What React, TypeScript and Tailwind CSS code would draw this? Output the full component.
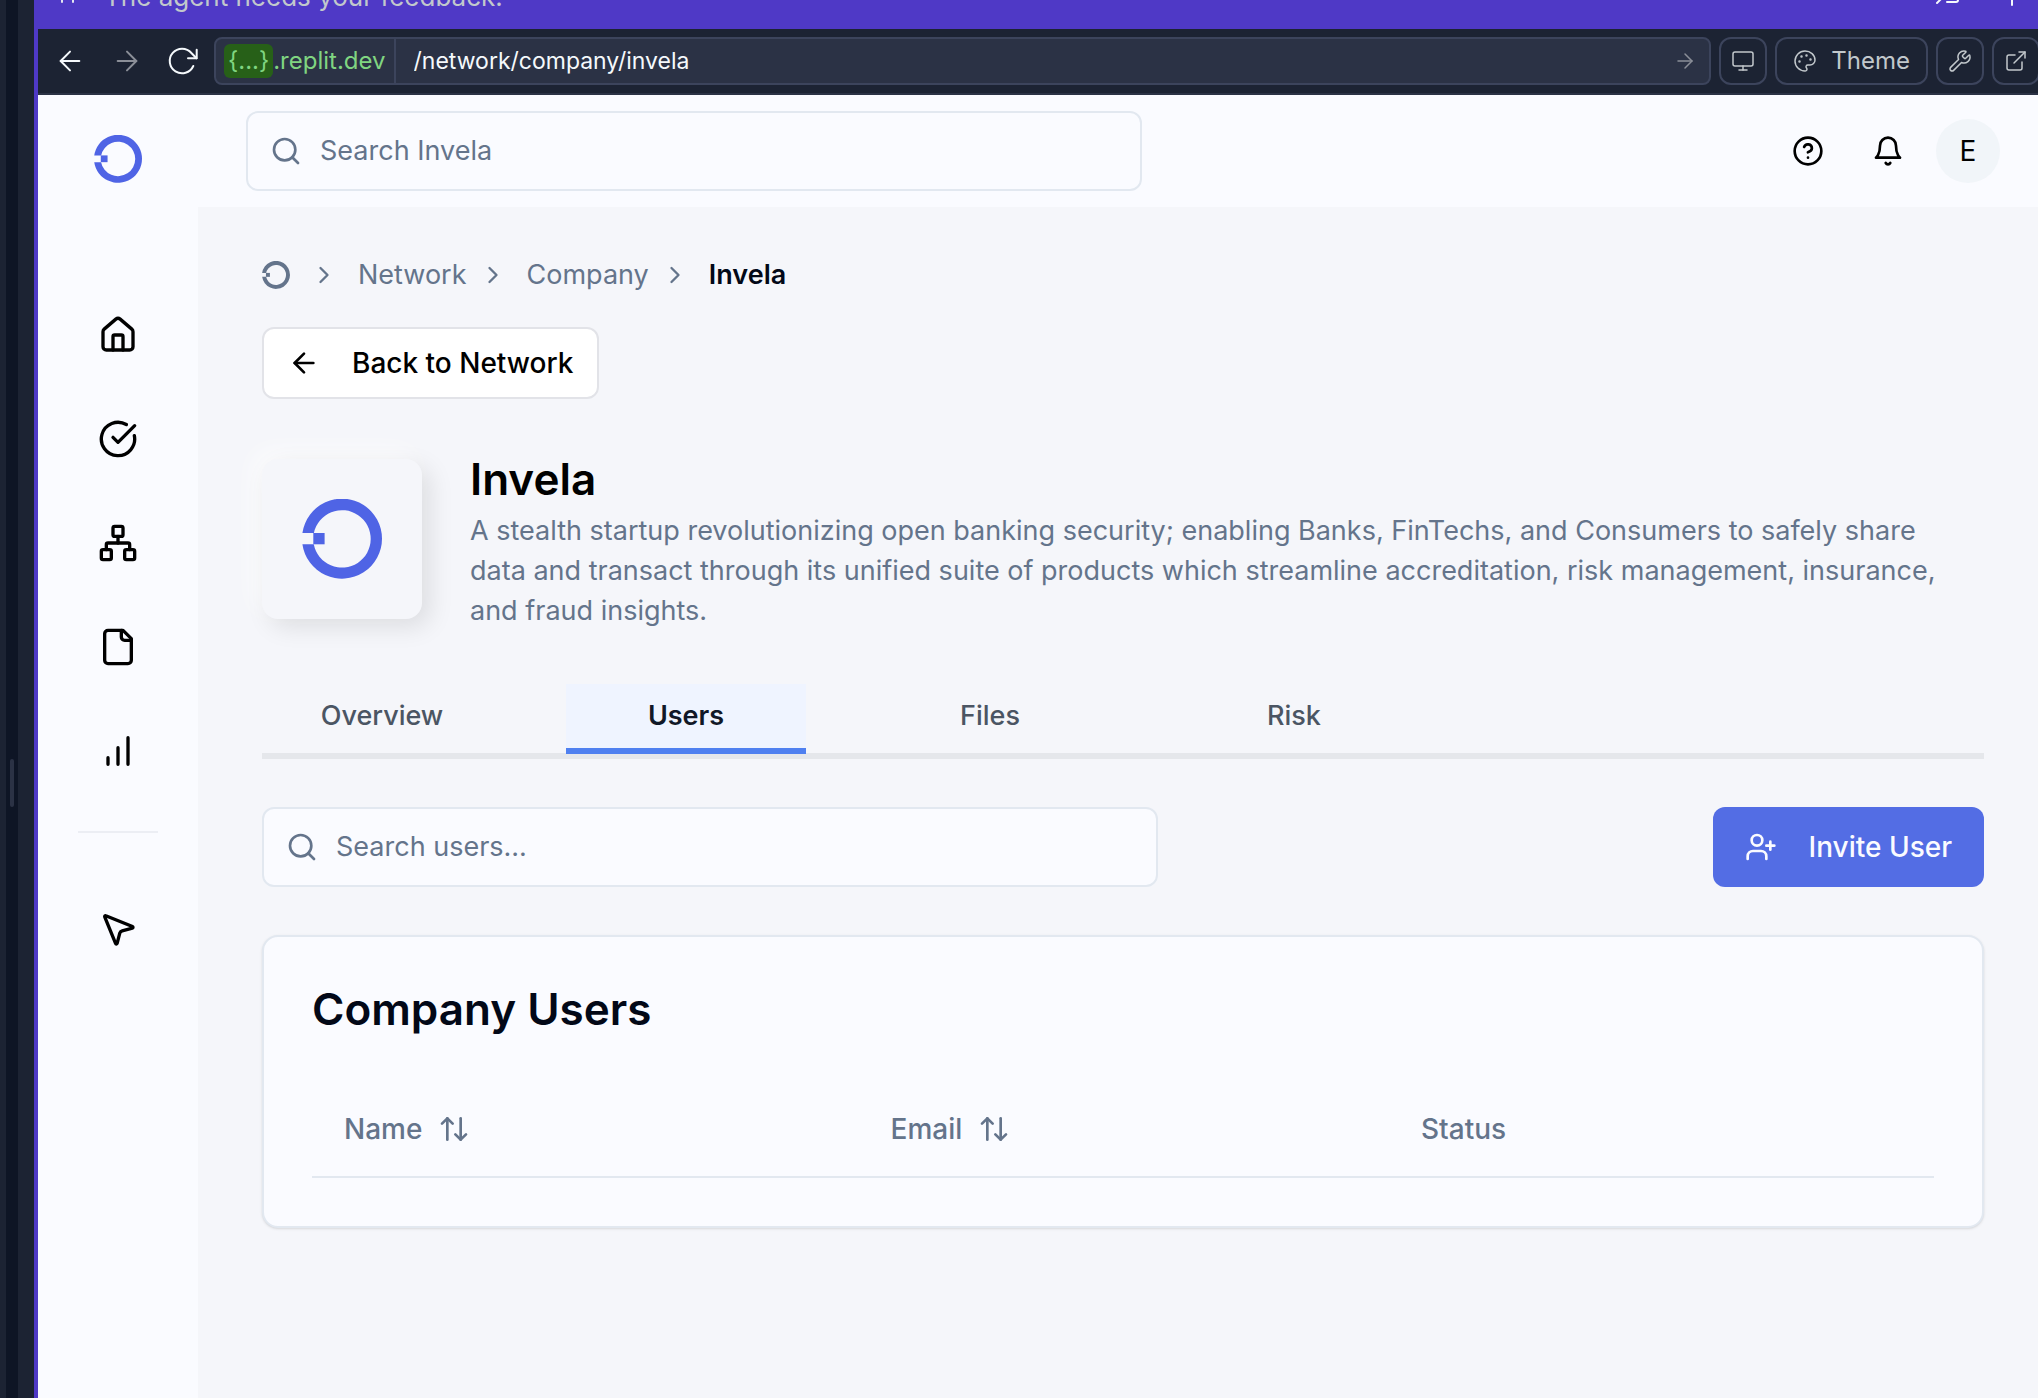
import React from "react";
import {
  ArrowLeft, ArrowRight, ArrowUpDown, ChevronRight, CircleHelp, Search, UserPlus, Monitor, Palette,
  Wrench, ExternalLink, MousePointer2, CircleCheckBig, Network, House,
} from "lucide-react";

function Logo({ className }: { className: string }) {
  return (
    <svg viewBox="0 0 80 80" className={className} fill="currentColor" aria-hidden="true">
      <path d="M0.4 34A40 40 0 1 1 0.4 45.3H11.8A28.7 28.7 0 1 0 11.9 34Z" />
      <rect x="11.3" y="34" width="11.3" height="11.3" />
    </svg>
  );
}

function Icon({ className, children }: { className: string; children: React.ReactNode }) {
  return (
    <svg viewBox="0 0 24 24" fill="none" stroke="currentColor" strokeWidth={2} strokeLinecap="round" strokeLinejoin="round" className={className} aria-hidden="true">
      {children}
    </svg>
  );
}

const BarsIcon = () => (
  <Icon className="size-10">
    <path d="M6 20v-4M12 20V10M18 20V4" />
  </Icon>
);
const FileIcon = () => (
  <Icon className="size-10">
    <path d="M15 2H6a2 2 0 0 0-2 2v16a2 2 0 0 0 2 2h12a2 2 0 0 0 2-2V7Z" />
    <path d="M14 2v4a2 2 0 0 0 2 2h4" />
  </Icon>
);
const BellIcon = () => (
  <Icon className="size-8">
    <path d="M6 8a6 6 0 0 1 12 0c0 7 3 9 3 9H3s3-2 3-9" />
    <path d="M10.3 21a1.94 1.94 0 0 0 3.4 0" />
  </Icon>
);
const ReloadIcon = () => (
  <svg viewBox="0 0 32 32" fill="none" stroke="currentColor" strokeWidth={2} strokeLinecap="round" strokeLinejoin="round" className="size-8" aria-hidden="true">
    <path d="M26.3 21A12.3 12.3 0 1 1 24.4 8l5.1 5.2" />
    <path d="M29.7 4.8v8.5H21" />
  </svg>
);

const nav = [
  { label: "Home", icon: <House className="size-10" /> },
  { label: "Tasks", icon: <CircleCheckBig className="size-10" /> },
  { label: "Network", icon: <Network className="size-10" /> },
  { label: "Files", icon: <FileIcon /> },
  { label: "Insights", icon: <BarsIcon /> },
];

const toolButton = "flex h-12 shrink-0 items-center justify-center rounded-xl border-2 border-[#3c445c] text-[#c2c8cc]";

function AgentBar() {
  return (
    <div className="flex h-[29px] shrink-0 items-end gap-6 overflow-hidden bg-[#4f39c6] pb-[18px] pl-[18px] text-[26px] leading-7 text-[#c2c8cc]">
      <svg viewBox="0 0 24 11" className="h-[11px] w-6 shrink-0" fill="none" stroke="#e4e6f2" strokeWidth={2} strokeLinecap="round" aria-hidden="true">
        <path d="M6 -4V2M17 -4V2" />
      </svg>
      <span className="flex-1">The agent needs your feedback.</span>
      <svg viewBox="0 0 104 11" className="h-[11px] w-[104px] shrink-0" fill="none" stroke="#f5f9fc" strokeWidth={2} strokeLinecap="round" strokeLinejoin="round" aria-hidden="true">
        <path d="M3 3L9 -3M13 2H22Q24 2 24 0V-3M78 -6V5" />
      </svg>
    </div>
  );
}

function Toolbar() {
  return (
    <div className="flex h-[66px] items-center gap-2 overflow-hidden border-b-2 border-[#2b3245] bg-[#1c2333]">
      <div className="flex w-[168px] shrink-0 items-center justify-between pr-[7px] pl-4 text-[#f5f9fc]">
        <button aria-label="Back"><ArrowLeft className="size-8" strokeWidth={1.5} /></button>
        <button aria-label="Forward" className="text-[#8b8f98]"><ArrowRight className="size-8" strokeWidth={1.5} /></button>
        <button aria-label="Reload"><ReloadIcon /></button>
      </div>
      <div className="flex h-12 min-w-0 flex-1 items-center rounded-lg border-2 border-[#3c445c] bg-[#2b3245] text-2xl">
        <div className="flex h-full items-center border-r-2 border-[#3c445c] px-2 text-[#80d581]">
          <span className="rounded-md bg-[#276018] px-1 leading-[34px]">{"{...}"}</span>
          <span>.replit.dev</span>
        </div>
        <input aria-label="Path" defaultValue="/network/company/invela" className="h-full min-w-0 flex-1 bg-transparent px-[18px] text-[23px] text-[#f5f9fc] outline-none" />
        <button aria-label="Go" className="pr-3 text-[#8b8f98]"><ArrowRight className="size-6" strokeWidth={1.5} /></button>
      </div>
      <button aria-label="Devices" className={toolButton + " w-12"}><Monitor className="size-6" strokeWidth={1.5} /></button>
      <button className={toolButton + " gap-3.5 px-4 text-2xl"}><Palette className="size-6" strokeWidth={1.5} />Theme</button>
      <button aria-label="Tools" className={toolButton + " w-12"}><Wrench className="size-6" strokeWidth={1.5} /></button>
      <button aria-label="Open in new tab" className={toolButton + " -mr-0.5 w-12"}><ExternalLink className="size-6" strokeWidth={1.5} /></button>
    </div>
  );
}

function SearchBox({ placeholder }: { placeholder: string }) {
  return (
    <label className="flex h-20 w-full max-w-[896px] items-center gap-[18px] rounded-xl border-2 border-[#e2e8f0] bg-[#fafbff] px-[22px] text-[27px] text-[#64748b]">
      <Search className="size-8 shrink-0" />
      <input type="text" aria-label={placeholder} placeholder={placeholder} className="w-full bg-transparent outline-none placeholder:text-[#64748b]" />
    </label>
  );
}

const tabs = ["Overview", "Users", "Files", "Risk"];

export default function App() {
  return (
    <div className="flex min-h-screen overflow-hidden bg-[#1c2333] font-['Inter',sans-serif] text-[28px] leading-10 text-black">
      <div className="flex w-[34px] shrink-0 pl-1.5">
        <div className="flex w-3 items-center justify-center bg-[#0e1525]">
          <div className="mt-[168px] h-12 w-1 rounded-sm bg-[#2b3245]" />
        </div>
      </div>
      <div className="flex min-w-0 flex-1 flex-col border-l-4 border-[#4f39c6]">
        <AgentBar />
        <Toolbar />
        <div className="flex flex-1 bg-[#fafbff]">
          <aside className="flex w-40 shrink-0 flex-col items-center pt-10">
            <a href="#" aria-label="Invela"><Logo className="size-12 text-[#4f64e5]" /></a>
            <nav className="flex w-full flex-col items-center pt-[132px]">
              <div className="flex flex-col gap-16">
                {nav.map((n) => (
                  <a key={n.label} href="#" aria-label={n.label}>{n.icon}</a>
                ))}
              </div>
              <hr className="my-[60px] w-20 border-t-2 border-[#eceef4]" />
              <a href="#" aria-label="Playground" className="mt-4"><MousePointer2 className="size-10" /></a>
            </nav>
          </aside>
          <div className="flex min-w-0 flex-1 flex-col">
            <header className="flex h-28 items-center justify-between pr-[38px] pl-12">
              <SearchBox placeholder="Search Invela" />
              <div className="flex shrink-0 items-center gap-12">
                <button aria-label="Help"><CircleHelp className="size-8" /></button>
                <button aria-label="Notifications"><BellIcon /></button>
                <button className="-ml-4 size-16 rounded-full bg-[#f1f5f9]">E</button>
              </div>
            </header>
            <main className="flex-1 bg-[#f5f6fa] pt-12 pr-[54px] pl-16">
              <nav aria-label="Breadcrumb" className="flex items-center text-[27px] text-[#64748b]">
                <a href="#" aria-label="Invela home"><Logo className="size-7" /></a>
                <ChevronRight className="mx-5 size-7" />
                <a href="#">Network</a>
                <ChevronRight className="mr-5 ml-3 size-7" />
                <a href="#">Company</a>
                <ChevronRight className="mr-5 ml-3 size-7" />
                <span className="font-semibold text-[#020817]">Invela</span>
              </nav>
              <button className="mt-8 flex h-[72px] items-center gap-8 rounded-xl border-2 border-[#e2e3e8] bg-white px-6 font-medium">
                <ArrowLeft className="size-8" />Back to Network
              </button>
              <section className="mt-12 flex items-center gap-12">
                <div className="flex size-40 shrink-0 items-center justify-center rounded-2xl bg-[#f5f6fa] shadow-[8px_8px_24px_rgba(0,0,0,0.1),-8px_-8px_24px_rgba(255,255,255,0.7)]">
                  <Logo className="size-20 text-[#4f64e5]" />
                </div>
                <div className="min-w-0 pr-5">
                  <h1 className="text-[44px] leading-[64px] font-semibold">Invela</h1>
                  <p className="text-[27px] text-[#64748b]">
                    A stealth startup revolutionizing open banking security; enabling Banks, FinTechs, and Consumers to safely share data and transact through its unified suite of products which streamline accreditation, risk management, insurance, and fraud insights.
                  </p>
                </div>
              </section>
              <div role="tablist" className="mt-[53px] flex gap-16 border-b-6 border-[#e5e7eb] text-[27px] font-medium text-[#4b5563]">
                {tabs.map((t) => (
                  <button key={t} role="tab" aria-selected={t === "Users"}
                    className={t === "Users" ? "-mb-px h-[70px] w-60 border-b-6 border-[#4f80f0] bg-[#eff4ff] font-semibold text-[#111827]" : "h-[69px] w-60 border-b-6 border-transparent"}>
                    {t}
                  </button>
                ))}
              </div>
              <div className="mt-12 flex items-center justify-between gap-8">
                <SearchBox placeholder="Search users..." />
                <button className="flex h-20 shrink-0 items-center gap-8 rounded-xl bg-[#536de4] px-8 font-medium text-[#fafbff]">
                  <UserPlus className="size-8" />Invite User
                </button>
              </div>
              <section className="mt-12 rounded-2xl border-2 border-[#e2e8f0] bg-[#fafbff] p-12 shadow-sm">
                <h2 className="text-[44px] leading-[48px] font-semibold text-[#020817]">Company Users</h2>
                <table className="mt-12 w-full table-fixed text-left text-[#64748b]">
                  <thead>
                    <tr className="h-24 border-b-2 border-[#e2e8f0]">
                      <th className="w-[33.7%] px-8 font-medium"><button className="flex items-center gap-4">Name<ArrowUpDown className="size-8" /></button></th>
                      <th className="w-[32.7%] px-8 font-medium"><button className="flex items-center gap-4">Email<ArrowUpDown className="size-8" /></button></th>
                      <th className="px-8 font-medium">Status</th>
                    </tr>
                  </thead>
                </table>
              </section>
            </main>
          </div>
        </div>
      </div>
    </div>
  );
}
